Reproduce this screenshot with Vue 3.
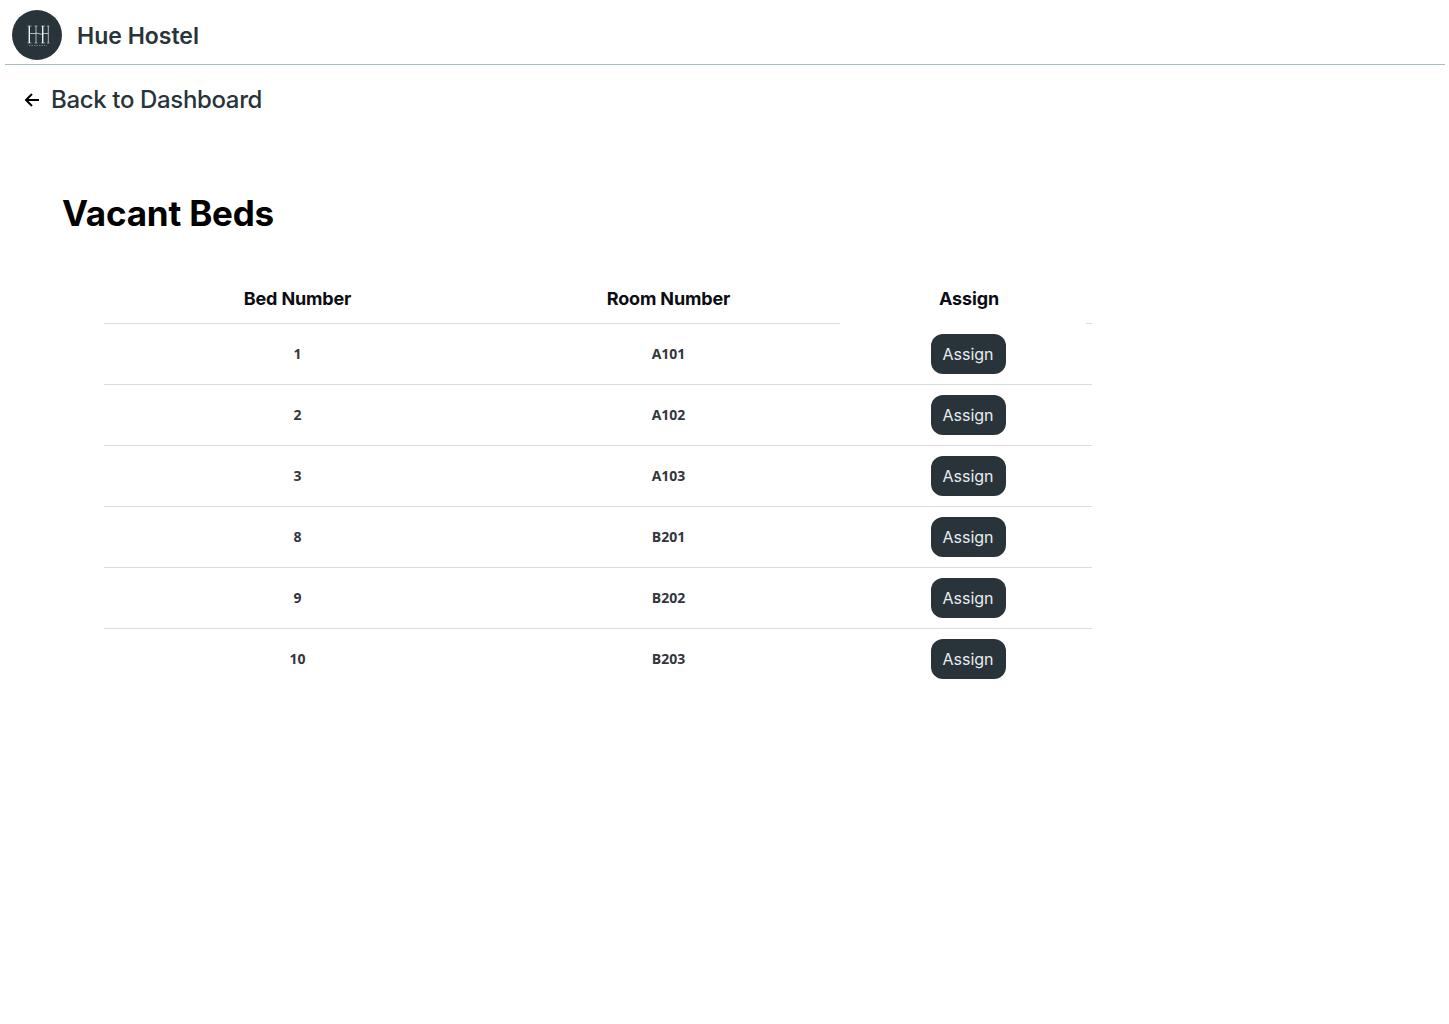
<template>
  <div class="page">
    <header class="topbar">
      <div class="logo">
        <svg width="26" height="24" viewBox="0 0 26 24" fill="none" stroke="#eef1f2">
          <path d="M5.3 3v17M18.7 3v17" stroke-width="1.4" />
          <path d="M12 3v17M24.3 3v17" stroke-width=".7" />
          <path d="M3.5 3h4M10.5 3h3M17 3h4M23 3h2.5M3.5 20h4M10.5 20h3M17 20h4M23 20h2.5" stroke-width=".5" />
          <path d="M5.3 10.5H12M18.7 10.5h5.6M12 10l6.7 1.5" stroke-width=".7" />
          <path d="M5 22.5h18" stroke-width=".7" stroke-dasharray="1.5 1" opacity=".55" />
        </svg>
      </div>
      <span class="brand">Hue Hostel</span>
    </header>

    <a class="back" href="#">
      <svg width="16" height="16" viewBox="0 0 16 16" fill="none" stroke="#000" stroke-width="2">
        <path d="M15 8H2M8 2 2 8l6 6" />
      </svg>
      <span>Back to Dashboard</span>
    </a>

    <h1 class="title">Vacant Beds</h1>

    <table class="beds">
      <thead>
        <tr>
          <th class="col-bed">Bed Number</th>
          <th class="col-room">Room Number</th>
          <th class="col-assign">Assign</th>
        </tr>
      </thead>
      <tbody>
        <tr v-for="bed in beds" :key="bed.id">
          <td class="text-cell">{{ bed.id }}</td>
          <td class="text-cell">{{ bed.room }}</td>
          <td class="assign-cell"><button class="btn">Assign</button></td>
        </tr>
      </tbody>
    </table>
  </div>
</template>

<script setup>
const beds = [
  { id: 1, room: 'A101' },
  { id: 2, room: 'A102' },
  { id: 3, room: 'A103' },
  { id: 8, room: 'B201' },
  { id: 9, room: 'B202' },
  { id: 10, room: 'B203' }
]
</script>

<style scoped>
.page { min-height: 1024px; background: #fff; font-family: Inter, "Noto Sans", sans-serif; }
.topbar { display: flex; align-items: flex-end; gap: 15px; height: 60px; margin: 0 4px 0 5px; padding: 0 0 4px 7px; border-bottom: 1px solid #a9bbc4; }
.logo { width: 50px; height: 50px; border-radius: 50%; background: #29343a; display: flex; align-items: center; justify-content: center; }
.brand { font-size: 23px; line-height: 48px; font-weight: 600; color: #29343a; }
.back { display: flex; align-items: center; gap: 11px; padding: 19px 0 0 24px; height: 31px; font-size: 24px; letter-spacing: -0.35px; font-weight: 550; color: #29343a; text-decoration: none; }
.title { margin: 77px 0 0 62px; height: 42px; font-size: 35px; letter-spacing: -0.2px; line-height: 42px; font-weight: 700; color: #000; }
.beds { margin: 39px 0 0 104px; width: 988px; border-collapse: collapse; table-layout: fixed; }
th { height: 50px; padding: 0; font-size: 18px; font-weight: 700; letter-spacing: -0.15px; color: #0b0d12; text-align: center; border-bottom: 1px solid #dcdcdc; }
.col-bed { width: 387px; }
.col-room { width: 355px; }
.col-assign { position: relative; }
.col-assign::after { content: ""; position: absolute; left: -6px; right: 6px; bottom: -1px; height: 1px; background: #fff; }
td { height: 60px; padding: 0; font-family: "Open Sans", sans-serif; font-size: 14px; font-weight: 700; color: #33373d; text-align: center; border-bottom: 1px solid #dcdcdc; }
.text-cell { box-sizing: border-box; padding-bottom: 2px; }
tbody tr:last-child td { border-bottom: 0; }
.assign-cell { padding-right: 2px; }
.btn { width: 75px; height: 40px; padding: 0; border: 0; border-radius: 12px; background: #29343a; color: #e8ecee; font-family: Inter, sans-serif; font-size: 16px; font-weight: 400; cursor: pointer; vertical-align: middle; }
</style>
